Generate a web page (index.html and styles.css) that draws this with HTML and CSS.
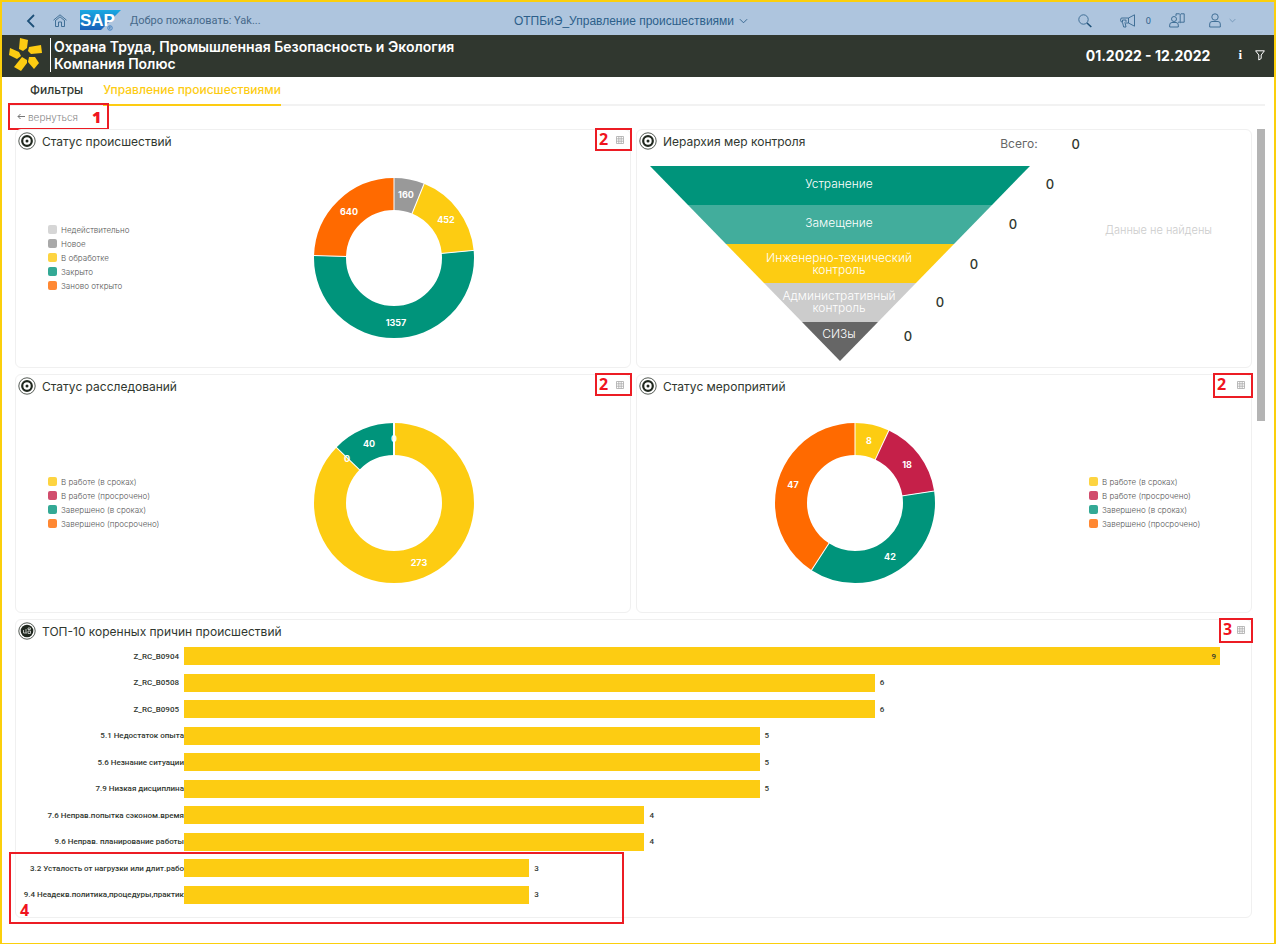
FILE: index.html
```html
<!DOCTYPE html>
<html lang="ru">
<head>
<meta charset="utf-8">
<meta name="viewport" content="width=device-width, initial-scale=1">
<title>ОТПБиЭ_Управление происшествиями</title>
<link rel="stylesheet" href="styles.css">
</head>
<body>
<svg class="defs" aria-hidden="true">
  <symbol id="target" viewBox="0 0 18 18">
    <circle cx="9" cy="9" r="8.2" fill="#fff" stroke="#555b55" stroke-width="1"/>
    <circle cx="9" cy="9" r="4.8" fill="none" stroke="#20281f" stroke-width="2.2"/>
    <circle cx="9" cy="9" r="1.5" fill="#20281f"/>
  </symbol>
  <symbol id="table" viewBox="0 0 8 8">
    <path d="M.5.5h7v7h-7zM.5 2.8h7M.5 5.2h7M2.8.5v7M5.2.5v7" fill="none" stroke="#a9a9a9" stroke-width=".8"/>
  </symbol>
  <symbol id="chevron" viewBox="0 0 10 6">
    <path d="M1 1l4 4 4-4" fill="none" stroke="currentColor"/>
  </symbol>
</svg>
<div class="page">
  <header class="shell">
    <div class="shell-left">
      <button class="icon-btn" aria-label="Назад"><svg width="10" height="14" viewBox="0 0 10 14"><path d="M8 1L2 7l6 6" fill="none" stroke="#1d5078" stroke-width="1.8"/></svg></button>
      <button class="icon-btn home" aria-label="Домой"><svg width="14" height="13" viewBox="0 0 14 13"><path d="M.5 6.2L7 .8l6.500 5.400M2 7l5-4.200L12 7M2.500 7v5.500h3V8h3v4.500h3V7" fill="none" stroke="#35678f" stroke-width=".9"/></svg></button>
      <svg class="sap" width="42" height="21" viewBox="0 0 42 21" role="img" aria-label="SAP">
        <defs><linearGradient id="sapfill" x1="0" y1="0" x2="0" y2="1"><stop offset="0" stop-color="#19a9e2"/><stop offset="1" stop-color="#1a5fb8"/></linearGradient></defs>
        <path d="M0 0h41L21 20H0z" fill="url(#sapfill)"/>
        <text x="0" y="16" class="sap-text">SAP</text>
        <circle cx="30" cy="18" r="2.300" fill="none" stroke="#2a70b8" stroke-width=".7"/><path d="M29.300 19.300v-2.600h1q.8.7 0 1.300h-1l1.500 1.300" fill="none" stroke="#2a70b8" stroke-width=".5"/>
      </svg>
      <span class="welcome">Добро пожаловать: Yak...</span>
    </div>
    <button class="shell-title">ОТПБиЭ_Управление происшествиями <svg width="9" height="6"><use href="#chevron"/></svg></button>
    <div class="shell-right">
      <button class="icon-btn" aria-label="Поиск"><svg width="14" height="14" viewBox="0 0 14 14"><circle cx="5.500" cy="5.500" r="4.700" fill="none" stroke="#35678f" stroke-width=".9"/><path d="M9 9l4.300 4" stroke="#1d5078" stroke-width="1.600"/></svg></button>
      <button class="icon-btn news"><svg width="16" height="14" viewBox="0 0 16 14"><path d="M14.500.8v11.400L8.500 9V4zM8.500 4H2Q.7 4 .7 5v1.800Q.7 8 2 8M8.500 9H6M2.500 7v1.500L3.700 13H6L5 8.500 6 7.500V6H2.500z" fill="none" stroke="#35678f" stroke-width=".9"/></svg><span>0</span></button>
      <button class="icon-btn" aria-label="Контакты"><svg width="16" height="15" viewBox="0 0 16 15"><circle cx="5" cy="6" r="2.500" fill="none" stroke="#35678f" stroke-width=".9"/><path d="M.7 14v-2Q.7 9.500 3 9.500h4q2.300 0 2.300 2.500v2zM7 3V.8h3.500l.7.700.7-.7h3.300v8.400h-3.400l-.6.600-.7-.6H9M11.200 1.500v8" fill="none" stroke="#35678f" stroke-width=".9"/></svg></button>
      <button class="icon-btn user" aria-label="Пользователь"><svg width="12" height="15" viewBox="0 0 12 15"><circle cx="6" cy="4" r="3.200" fill="none" stroke="#35678f" stroke-width=".9"/><path d="M.7 14v-3Q.7 8.500 3 8.500h6q2.300 0 2.300 2.500v3z" fill="none" stroke="#35678f" stroke-width=".9"/></svg><svg width="7" height="5" class="light"><use href="#chevron"/></svg></button>
    </div>
  </header>

  <div class="banner">
    <svg class="brand" width="35" height="34" viewBox="0 0 35 34" role="img" aria-label="Полюс"><g fill="#fdcc12">
      <path d="M12 0l8 2-1 8-4 3-4-2z"/><path d="M21 9l12-2 1 8-11 1-3-3z"/><path d="M21 19h6l4 6-5 6-6-7z"/><path d="M14 19l5 3v3l-6 8-7-4z"/><path d="M2 10l9 4 2 4-4 3-8-4z"/></g></svg>
    <h1>Охрана Труда, Промышленная Безопасность и Экология<br>Компания Полюс</h1>
    <strong class="period">01.2022 - 12.2022</strong>
    <button class="icon-btn info" aria-label="Информация">i</button>
    <button class="icon-btn" aria-label="Фильтр"><svg width="10" height="11" viewBox="0 0 10 11"><path d="M.6.8h8.800L6.200 5v3.500L3.800 10V5z" fill="none" stroke="#fff"/></svg></button>
  </div>

  <nav class="tabs">
    <a href="#filters">Фильтры</a>
    <a href="#incidents" class="active">Управление происшествиями</a>
  </nav>

  <div class="back-row"><div class="back-mark"><a href="#back" class="back"><svg width="8" height="7" viewBox="0 0 8 7"><path d="M8 3.500H1M3.500 1L1 3.500 3.500 6" fill="none" stroke="#777"/></svg>вернуться</a><b>1</b></div></div>

  <div class="scroller">
    <main class="dashboard">
      <section class="card">
        <header class="card-head"><svg width="18" height="18"><use href="#target"/></svg><h2>Статус происшествий</h2>
          <button class="icon-btn" aria-label="Таблица"><svg width="8" height="8"><use href="#table"/></svg></button></header>
        <div class="note">2</div>
        <div class="chart">
          <ul class="legend">
            <li class="c-pale">Недействительно</li><li class="c-gray">Новое</li><li class="c-yellow">В обработке</li><li class="c-green">Закрыто</li><li class="c-orange">Заново открыто</li>
          </ul>
          <svg class="donut" viewBox="-81 -81 162 162">
            <g transform="rotate(-90)">
              <circle r="64" pathLength="2609" stroke="#999" stroke-dasharray="160 2609"/>
              <circle r="64" pathLength="2609" stroke="#fdcc12" stroke-dasharray="452 2609" stroke-dashoffset="-160"/>
              <circle r="64" pathLength="2609" stroke="#00947b" stroke-dasharray="1357 2609" stroke-dashoffset="-612"/>
              <circle r="64" pathLength="2609" stroke="#ff6a00" stroke-dasharray="640 2609" stroke-dashoffset="-1969"/>
            </g>
            <path d="M0-47v-35"/><path d="M0-47v-35" transform="rotate(22.080)"/><path d="M0-47v-35" transform="rotate(84.450)"/><path d="M0-47v-35" transform="rotate(271.700)"/>
            <text x="12" y="-60">160</text><text x="52" y="-35">452</text><text x="2" y="68">1357</text><text x="-45" y="-43">640</text>
          </svg>
        </div>
      </section>

      <section class="card">
        <header class="card-head"><svg width="18" height="18"><use href="#target"/></svg><h2>Иерархия мер контроля</h2>
          <div class="total"><span>Всего:</span><b>0</b></div></header>
        <div class="hierarchy">
          <svg class="pyramid" viewBox="0 0 410 196">
            <path d="M0 0h380l-38 39H38z" fill="#00947b"/>
            <path d="M38 39h304l-38 39H76z" fill="#42ad9c"/>
            <path d="M76 78h228l-38 39H114z" fill="#fdcc12"/>
            <path d="M114 117h152l-38 39h-76z" fill="#ccc"/>
            <path d="M152 156h76l-38 39z" fill="#666"/>
            <text x="189" y="22">Устранение</text>
            <text x="189" y="61">Замещение</text>
            <text x="189" y="96">Инженерно-технический<tspan x="189" dy="12">контроль</tspan></text>
            <text x="189" y="134">Административный<tspan x="189" dy="12">контроль</tspan></text>
            <text x="189" y="172">СИЗы</text>
            <g class="counts"><text x="400" y="23">0</text><text x="363" y="63">0</text><text x="324" y="103">0</text><text x="290" y="141">0</text><text x="258" y="175">0</text></g>
          </svg>
          <p class="empty">Данные не найдены</p>
        </div>
      </section>

      <section class="card">
        <header class="card-head"><svg width="18" height="18"><use href="#target"/></svg><h2>Статус расследований</h2>
          <button class="icon-btn" aria-label="Таблица"><svg width="8" height="8"><use href="#table"/></svg></button></header>
        <div class="note">2</div>
        <div class="chart">
          <ul class="legend">
            <li class="c-yellow">В работе (в сроках)</li><li class="c-red">В работе (просрочено)</li><li class="c-green">Завершено (в сроках)</li><li class="c-orange">Завершено (просрочено)</li>
          </ul>
          <svg class="donut" viewBox="-81 -81 162 162">
            <g transform="rotate(-90)">
              <circle r="64" pathLength="313" stroke="#fdcc12" stroke-dasharray="273 313"/>
              <circle r="64" pathLength="313" stroke="#00947b" stroke-dasharray="40 313" stroke-dashoffset="-273"/>
            </g>
            <path d="M0-47v-35" class="wide"/><path d="M0-47v-35" transform="rotate(314)"/>
            <text x="25" y="63">273</text><text x="-47" y="-41">0</text><text x="-25" y="-56">40</text><text x="0" y="-61">0</text>
          </svg>
        </div>
      </section>

      <section class="card">
        <header class="card-head"><svg width="18" height="18"><use href="#target"/></svg><h2>Статус мероприятий</h2>
          <button class="icon-btn" aria-label="Таблица"><svg width="8" height="8"><use href="#table"/></svg></button></header>
        <div class="note large">2</div>
        <div class="chart legend-end">
          <svg class="donut" viewBox="-81 -81 162 162">
            <g transform="rotate(-90)">
              <circle r="64" pathLength="115" stroke="#fdcc12" stroke-dasharray="8 115"/>
              <circle r="64" pathLength="115" stroke="#c52049" stroke-dasharray="18 115" stroke-dashoffset="-8"/>
              <circle r="64" pathLength="115" stroke="#00947b" stroke-dasharray="42 115" stroke-dashoffset="-26"/>
              <circle r="64" pathLength="115" stroke="#ff6a00" stroke-dasharray="47 115" stroke-dashoffset="-68"/>
            </g>
            <path d="M0-47v-35"/><path d="M0-47v-35" transform="rotate(25)"/><path d="M0-47v-35" transform="rotate(81.400)"/><path d="M0-47v-35" transform="rotate(212.900)"/>
            <text x="14" y="-59">8</text><text x="52" y="-35">18</text><text x="35" y="57">42</text><text x="-62" y="-15">47</text>
          </svg>
          <ul class="legend">
            <li class="c-yellow">В работе (в сроках)</li><li class="c-red">В работе (просрочено)</li><li class="c-green">Завершено (в сроках)</li><li class="c-orange">Завершено (просрочено)</li>
          </ul>
        </div>
      </section>

      <section class="card causes">
        <header class="card-head"><svg width="18" height="18" viewBox="0 0 18 18"><circle cx="9" cy="9" r="8.200" fill="#fff" stroke="#555b55"/><circle cx="9" cy="9" r="6.300" fill="#20281f"/><path d="M5.500 8v3H8V7M8 11h1M10 6h2.500v1.500H10zM10 9h2.500v2.500H10z" fill="none" stroke="#c9ccc8" stroke-width=".9"/></svg><h2>ТОП-10 коренных причин происшествий</h2>
          <button class="icon-btn" aria-label="Таблица"><svg width="8" height="8"><use href="#table"/></svg></button></header>
        <div class="note large">3</div>
        <ul class="bars">
          <li><span class="label short">Z_RC_B0904</span><div class="track"><div class="bar" style="width:100%">9</div></div></li>
          <li><span class="label short">Z_RC_B0508</span><div class="track"><div class="bar" style="width:66.67%"></div>6</div></li>
          <li><span class="label short">Z_RC_B0905</span><div class="track"><div class="bar" style="width:66.67%"></div>6</div></li>
          <li><span class="label">5.1 Недостаток опыта</span><div class="track"><div class="bar" style="width:55.56%"></div>5</div></li>
          <li><span class="label">5.6 Незнание ситуации</span><div class="track"><div class="bar" style="width:55.56%"></div>5</div></li>
          <li><span class="label">7.9 Низкая дисциплина</span><div class="track"><div class="bar" style="width:55.56%"></div>5</div></li>
          <li><span class="label">7.6 Неправ.попытка сэконом.время</span><div class="track"><div class="bar" style="width:44.44%"></div>4</div></li>
          <li><span class="label">9.6 Неправ. планирование работы</span><div class="track"><div class="bar" style="width:44.44%"></div>4</div></li>
          <li><span class="label">3.2 Усталость от нагрузки или длит.рабо</span><div class="track"><div class="bar" style="width:33.33%"></div>3</div></li>
          <li><span class="label">9.4 Неадекв.политика,процедуры,практик</span><div class="track"><div class="bar" style="width:33.33%"></div>3</div></li>
        </ul>
        <div class="region-note">4</div>
      </section>
    </main>
    <div class="thumb"></div>
  </div>
</div>
</body>
</html>
```
FILE: styles.css
```css
* { box-sizing: border-box; }
body { margin: 0; font-family: Inter, "Noto Sans", sans-serif; color: #30372f; background: #fff; }
h1, h2, p, ul { margin: 0; padding: 0; }
ul { list-style: none; }
button { font: inherit; color: inherit; }
svg { flex: none; }
.defs { position: absolute; width: 0; height: 0; }
.page { min-height: 100vh; border: 2px solid #fbcf0c; }
.icon-btn { display: flex; align-items: center; padding: 0; border: 0; background: none; }

.shell { display: grid; grid-template-columns: 1fr auto 1fr; align-items: center; height: 33px; padding: 4px 38px 0 24px; background: #aec5de; color: #2c5f8a; }
.shell-left, .shell-right { display: flex; align-items: center; }
.home { margin: 0 13px 0 17px; }
.sap-text { font: 700 17px "Liberation Sans", sans-serif; fill: #fff; }
.welcome { margin-left: 8px; font: 11px Roboto, sans-serif; color: #46698a; }
.shell-title { display: flex; align-items: center; gap: 5px; padding: 0; border: 0; background: none; font: 12px "Liberation Sans", sans-serif; }
.shell-right { justify-content: flex-end; gap: 18px; }
.news { gap: 10px; margin: 0 0 0 10px; font: 9px "Noto Sans", sans-serif; }
.user { gap: 8px; margin-left: 6px; }
.light { opacity: .6; }

.banner { display: flex; align-items: center; height: 42px; padding: 0 9px 2px 6px; background: #30372f; color: #fff; }
h1 { margin-left: 7px; padding-left: 3px; border-left: 1px solid #fff; font-size: 14px; line-height: 17px; font-weight: 600; }
.period { margin-left: auto; font-size: 14px; }
.info { margin: 0 13px 0 28px; font: 700 13px "Liberation Serif", serif; }

.tabs { display: flex; gap: 20px; height: 29px; margin: 0 9px 0 6px; padding-left: 22px; border-bottom: 2px solid #f2f2f2; font-size: 12px; font-weight: 500; }
.tabs a { height: 29px; line-height: 26px; color: #30372f; text-decoration: none; }
.tabs .active { border-bottom: 2px solid #fdcc12; color: #fdcc12; }

.back-row { display: flex; align-items: flex-start; height: 23px; padding-left: 6px; }
.back-mark { display: flex; align-items: center; gap: 14px; height: 27px; margin-top: -3px; padding: 0 6px 0 7px; border: 2px solid #ec1c24; color: #f0141e; font: 700 16px "Open Sans", sans-serif; position: relative; }
.back { display: flex; align-items: center; gap: 3px; font: 300 10px Inter, sans-serif; color: #888; text-decoration: none; }

.scroller { display: flex; align-items: flex-start; gap: 5px; padding: 0 9px 25px 13px; }
.dashboard { flex: 1; display: grid; grid-template-columns: 1fr 1fr; gap: 6px 5px; }
.thumb { width: 8px; height: 292px; background: #b4b4b4; }
.card { position: relative; display: flex; flex-direction: column; min-height: 239px; border: 1px solid #f0f0f0; border-radius: 6px; }
.card-head { display: flex; align-items: center; gap: 6px; height: 22px; padding: 0 6px 0 2px; }
.card-head > .icon-btn { margin: 6px 0 0 auto; align-self: flex-start; }
h2 { font-size: 12px; font-weight: 400; }
.note { position: absolute; top: -2px; right: -2px; width: 37px; height: 23px; padding-left: 2px; border: 2px solid #ec1c24; color: #f0141e; font: 700 16px/19px "Open Sans", sans-serif; }
.note.large { width: 40px; height: 25px; }
.causes .note { width: 34px; }

.chart { flex: 1; display: grid; grid-template-columns: 23% 1fr; align-items: center; padding-bottom: 4px; }
.legend-end { grid-template-columns: 71% 1fr; }
.legend { padding-left: 32px; }
.legend-end .legend { padding-left: 16px; }
.legend li { display: flex; align-items: center; gap: 4px; height: 14px; font-size: 8px; font-weight: 300; color: #555; white-space: nowrap; }
.legend li::before { content: ""; flex: none; width: 9px; height: 9px; border-radius: 2px; background: currentColor; }
.legend .c-pale::before { color: #d6d6d6; }
.legend .c-gray::before { color: #a9a9a9; }
.legend .c-yellow::before { color: #fdd441; }
.legend .c-green::before { color: #33a995; }
.legend .c-orange::before { color: #ff8833; }
.legend .c-red::before { color: #d14d6d; }
.donut { width: 162px; justify-self: center; }
.donut circle { fill: none; stroke-width: 32; }
.donut path { stroke: #fff; stroke-width: 1; }
.donut .wide { stroke-width: 2; }
.donut text { fill: #fff; font-size: 9px; font-weight: 700; text-anchor: middle; }

.total { display: flex; align-items: center; gap: 34px; margin: 5px 0 0 auto; padding-right: 165px; font-size: 12px; color: #666; }
.total b { font-size: 13px; font-weight: 500; color: #30372f; }
.hierarchy { display: grid; grid-template-columns: 410px 1fr; padding: 14px 0 0 13px; }
.pyramid { width: 410px; }
.pyramid text { fill: #fff; font-size: 12px; font-weight: 300; text-anchor: middle; }
.pyramid .counts text { fill: #30372f; font-size: 13px; font-weight: 500; }
.empty { padding: 57px 0 0 6px; text-align: center; font-size: 11px; font-weight: 300; color: #ccc; }

.causes { grid-column: 1 / -1; min-height: 299px; }
.bars { flex: 1; display: flex; flex-direction: column; justify-content: space-between; padding: 5px 31px 13px 0; font: 500 8px Roboto, sans-serif; }
.bars li { display: grid; grid-template-columns: 168px 1fr; align-items: center; }
.label { text-align: right; white-space: nowrap; }
.label.short { padding-right: 5px; }
.track { display: flex; align-items: center; gap: 5px; }
.bar { display: flex; align-items: center; justify-content: flex-end; height: 18px; padding-right: 4px; background: #fdcc12; }
.region-note { position: absolute; left: -7px; bottom: -7px; width: calc(50% - 3px); height: 72px; padding: 46px 0 0 9px; border: 2px solid #ec1c24; color: #f0141e; font: 700 16px/20px "Open Sans", sans-serif; }
```
